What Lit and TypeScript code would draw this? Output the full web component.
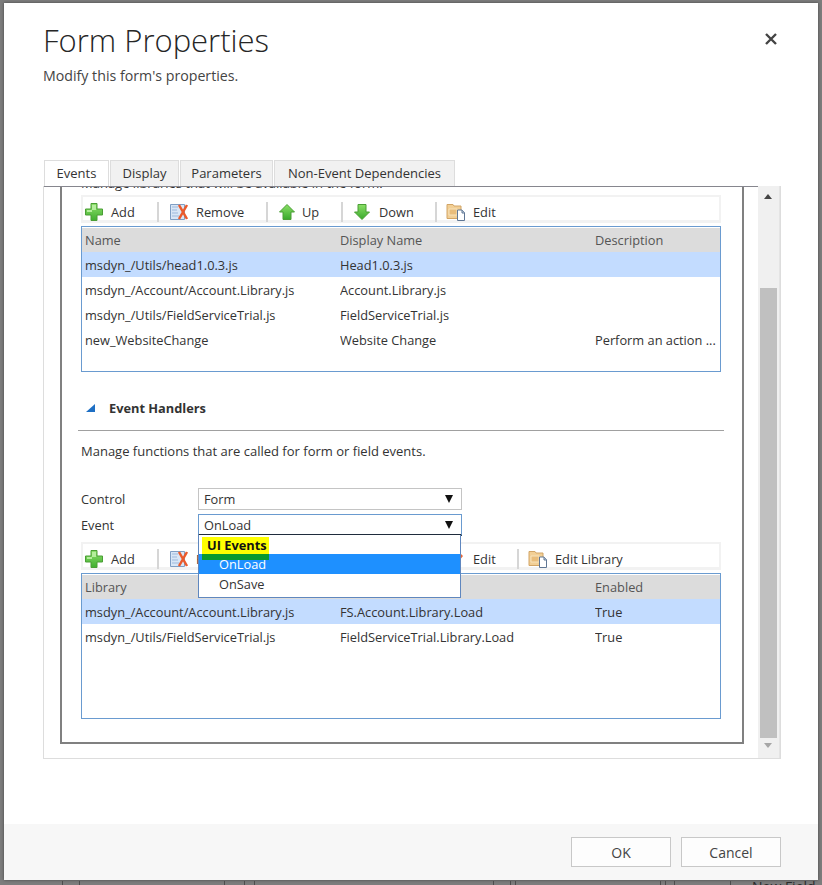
import { LitElement, html, css, svg } from 'lit';
import { customElement } from 'lit/decorators.js';

const grad = (id: string, top: string, bottom: string) =>
  svg`<defs><linearGradient id=${id} x1="0" y1="0" x2="0" y2="1"><stop offset="0" stop-color=${top}/><stop offset="1" stop-color=${bottom}/></linearGradient></defs>`;

const plusIcon = html`<svg width="19" height="18" viewBox="0 0 19 18">${grad('gp', '#8fe06c', '#3fae2f')}<path d="M6 .5h6V6h5.500v6H12v5.500H6V12H.5V6H6z" fill="url(#gp)" stroke="#4a9e35"/><path d="M7 2h4v5H7zM2 7h5v2H2z" fill="#b4ee9c"/></svg>`;
const removeIcon = html`<svg width="19" height="18" viewBox="0 0 19 18"><path d="M.5 1.500h14v15H.5z" fill="#d8e6f6" stroke="#7f9ec4"/><path d="M2 4h6M2 7h5M2 10h6M2 13h7" stroke="#9db9dc"/><path d="M9 2l8 14M17 2l-8 14" stroke="#ea5a2c" stroke-width="2.5"/></svg>`;
const upIcon = html`<svg width="16" height="16" viewBox="0 0 16 16">${grad('gu', '#8be066', '#38a82b')}<path d="M8 .5L15.500 8H12v7.500H4V8H.5z" fill="url(#gu)" stroke="#4a9e35"/></svg>`;
const downIcon = html`<svg width="18" height="16" viewBox="0 0 18 16">${grad('gd', '#8be066', '#38a82b')}<path d="M8 15.500L15.500 8H12V.5H4V8H.5z" fill="url(#gd)" stroke="#4a9e35"/></svg>`;
const editIcon = html`<svg class="shift" width="20" height="19" viewBox="0 0 20 19"><path d="M1 4V2.500h6L8 4h7v12.500H1z" fill="#f2cf95" stroke="#d2a566"/><path d="M3 7h8v6H3z" fill="#e9bd7b" stroke="#f7e3bd"/><path d="M11.500 8H16l2.500 2.500v8h-7z" fill="#fff" stroke="#5f7694"/><path d="M16 8v3h2.500" fill="#c6d3e2" stroke="#5f7694"/></svg>`;
const pencilIcon = html`<svg class="shift" width="20" height="19" viewBox="0 0 20 19"><path d="M2 2h11v15H2z" fill="#e8eef6" stroke="#8aa0bc"/><path d="M15 5l2 2-4 5-2-2z" fill="#e8683a"/></svg>`;

type Tool = { label: string; icon: unknown; w: number };

const tools: Tool[] = [
  { label: 'Add', icon: plusIcon, w: 74 },
  { label: 'Remove', icon: removeIcon, w: 109 },
  { label: 'Up', icon: upIcon, w: 75 },
  { label: 'Down', icon: downIcon, w: 94 },
  { label: 'Edit', icon: editIcon, w: 70 },
];

const tools2: Tool[] = [
  { label: 'Add', icon: plusIcon, w: 74 },
  { label: 'Remove', icon: removeIcon, w: 109 },
  { label: 'Up', icon: upIcon, w: 75 },
  { label: 'Down', icon: downIcon, w: 94 },
  { label: 'Edit', icon: pencilIcon, w: 82 },
  { label: 'Edit Library', icon: editIcon, w: 110 },
];

const libraries = [
  ['msdyn_/Utils/head1.0.3.js', 'Head1.0.3.js', ''],
  ['msdyn_/Account/Account.Library.js', 'Account.Library.js', ''],
  ['msdyn_/Utils/FieldServiceTrial.js', 'FieldServiceTrial.js', ''],
  ['new_WebsiteChange', 'Website Change', 'Perform an action ...'],
];

const handlers = [
  ['msdyn_/Account/Account.Library.js', 'FS.Account.Library.Load', 'True'],
  ['msdyn_/Utils/FieldServiceTrial.js', 'FieldServiceTrial.Library.Load', 'True'],
];

// bits of the page behind the dialog that show under its bottom edge
const behind = [62, 79, 224, 244, 254, 493, 510, 515, 660, 665, 674, 730];

@customElement('app-root')
export class AppRoot extends LitElement {
  static styles = css`
    :host {
      display: block;
      position: relative;
      width: 822px;
      height: 885px;
      overflow: hidden;
      box-sizing: border-box;
      padding: 3px 4px 5px 4px;
      background: #7d7d7d;
      font-family: 'Open Sans', 'Noto Sans', sans-serif;
      font-size: 12.8px;
      color: #333;
    }
    .dialog {
      position: relative;
      height: 100%;
      display: flex;
      flex-direction: column;
      background: #fff;
      box-shadow: 0 0 3px #444;
    }
    .head {
      height: 157px;
      box-sizing: border-box;
      padding: 15px 0 0 39px;
    }
    h1 {
      margin: 0;
      font-size: 31px;
      line-height: 44px;
      font-weight: 300;
      color: #262626;
    }
    .sub {
      margin-top: 4px;
      font-size: 14.2px;
      line-height: 20px;
      color: #444;
    }
    .close {
      position: absolute;
      right: 40px;
      top: 29px;
    }
    .tabs {
      display: flex;
      height: 26px;
      padding-left: 40px;
      font-size: 13px;
    }
    .tab {
      box-sizing: border-box;
      height: 26px;
      line-height: 25px;
      text-align: center;
      background: #f1f1f1;
      border: 1px solid #ddd;
      border-bottom: none;
      margin-right: 1px;
    }
    .tab.active {
      background: #fff;
    }
    .panel {
      position: relative;
      margin-left: 39px;
      width: 738px;
      height: 573px;
      box-sizing: border-box;
      border: 1px solid #ddd;
      border-top: none;
      display: flex;
    }
    .frame {
      position: absolute;
      top: 0;
      left: 0;
      width: 716px;
      border-top: 1px solid #86868e;
    }
    .scrollarea {
      width: 715px;
      height: 572px;
      overflow: hidden;
    }
    .inner {
      margin-left: 16px;
      width: 684px;
      height: 558px;
      box-sizing: border-box;
      border-left: 2px solid #808080;
      border-right: 2px solid #808080;
      border-bottom: 2px solid #808080;
      padding-left: 19px;
      overflow: hidden;
    }
    .clipped {
      margin-top: -12px;
      height: 21px;
      line-height: 18px;
      font-size: 13px;
      white-space: nowrap;
    }
    .toolbar {
      display: flex;
      align-items: center;
      width: 640px;
      height: 28px;
      box-sizing: border-box;
      border: 2px solid #f2f2f2;
      border-bottom: 3px solid #f2f2f2;
      padding: 6px 0 0 2px;
    }
    .tool {
      flex: none;
      display: flex;
      align-items: center;
      box-sizing: border-box;
      height: 20px;
      gap: 7px;
      border-right: 2px solid #d6d6d6;
      white-space: nowrap;
    }
    .tool:not(:first-child) {
      padding-left: 11px;
    }
    .tool:last-child {
      border-right: none;
    }
    .shift {
      margin-left: -2px;
    }
    .grid {
      width: 640px;
      height: 146px;
      margin-top: 3px;
      box-sizing: border-box;
      border: 1px solid #6a9bd0;
    }
    .row {
      display: grid;
      grid-template-columns: 255px 255px 1fr;
      height: 25px;
      line-height: 27px;
      padding-left: 3px;
      white-space: nowrap;
    }
    .row span {
      overflow: hidden;
    }
    .row.header {
      margin-top: 1px;
      height: 24px;
      line-height: 25px;
      background: #dcdcdc;
      color: #555;
    }
    .row.selected {
      background: #c3dcff;
    }
    .section {
      display: flex;
      align-items: center;
      height: 20px;
      margin-top: 26px;
      padding-left: 5px;
      font-weight: 700;
      gap: 13px;
    }
    .rule {
      margin: 12px 0 0 -3px;
      width: 646px;
      border-top: 1px solid #a0a0a0;
    }
    .desc {
      margin-top: 10px;
      line-height: 20px;
      font-size: 13px;
    }
    .fields {
      margin-top: 27px;
      margin-bottom: 6px;
    }
    .field {
      display: flex;
      align-items: center;
      height: 22px;
      margin-bottom: 4px;
    }
    .field label {
      width: 117px;
    }
    .select {
      position: relative;
      display: flex;
      align-items: center;
      justify-content: space-between;
      width: 264px;
      height: 22px;
      box-sizing: border-box;
      border: 1px solid #c4c4c4;
      padding: 0 7px 0 5px;
    }
    .select.open {
      border: 1px solid #6a9bd0;
      border-bottom: 2px solid #1f2c3d;
    }
    .select.open > span {
      padding-top: 1px;
    }
    .menu {
      position: absolute;
      top: 20px;
      left: -1px;
      width: 263px;
      height: 63px;
      box-sizing: border-box;
      background: #fff;
      border: 1px solid #5f87bf;
      border-top: none;
      z-index: 2;
    }
    .group {
      height: 19px;
    }
    .group b {
      position: absolute;
      left: 3px;
      top: 2px;
      width: 67px;
      height: 23px;
      padding-left: 5px;
      box-sizing: border-box;
      line-height: 17px;
      font-weight: 700;
      color: #111;
      background: linear-gradient(#ffff00 17px, #0a9a2e 17px);
    }
    .opt {
      height: 20px;
      line-height: 20px;
      padding-left: 20px;
    }
    .opt.on {
      background: #1e90ff;
      color: #fff;
    }
    .scrollbar {
      position: relative;
      width: 21px;
      height: 572px;
      flex: none;
      background: #f0f0f0;
      border-right: 1px solid #e4e4e4;
    }
    .thumb {
      position: absolute;
      left: 2px;
      top: 102px;
      width: 17px;
      height: 450px;
      background: #c0c0c0;
    }
    .arrow-up,
    .arrow-down {
      position: absolute;
      left: 6px;
      width: 0;
      height: 0;
      border: 4.5px solid transparent;
    }
    .arrow-up {
      top: 8px;
      border-top: none;
      border-bottom: 5px solid #444;
    }
    .arrow-down {
      top: 557px;
      border-bottom: none;
      border-top: 5px solid #a6a6a6;
    }
    .foot {
      margin-top: auto;
      height: 56px;
      box-sizing: border-box;
      background: #f7f7f7;
      display: flex;
      justify-content: flex-end;
      gap: 10px;
      padding: 13px 37px 0 0;
    }
    .btn {
      width: 100px;
      height: 30px;
      box-sizing: border-box;
      border: 1px solid #c8c8c8;
      background: #fdfdfd;
      text-align: center;
      line-height: 29px;
      font-size: 14px;
      color: #444;
    }
    .behind {
      position: absolute;
      left: 0;
      bottom: 0;
      width: 822px;
      height: 4px;
      overflow: hidden;
    }
    .tick {
      position: absolute;
      top: 0;
      width: 1px;
      height: 4px;
      background: #4d4d4d;
    }
    .newfield {
      position: absolute;
      left: 752px;
      top: -3px;
      font-size: 14px;
      line-height: 18px;
      color: #2b2b2b;
    }
  `;

  private renderTools(items: Tool[]) {
    return html`<div class="toolbar">
      ${items.map(
        (t) => html`<div class="tool" style="width:${t.w}px">${t.icon}<span>${t.label}</span></div>`
      )}
    </div>`;
  }

  private renderGrid(cols: string[], rows: string[][]) {
    return html`<div class="grid">
      <div class="row header">${cols.map((c) => html`<span>${c}</span>`)}</div>
      ${rows.map(
        (r, i) => html`<div class="row ${i === 0 ? 'selected' : ''}">${r.map((c) => html`<span>${c}</span>`)}</div>`
      )}
    </div>`;
  }

  render() {
    const caret = html`<svg width="10" height="8" viewBox="0 0 10 8"><path d="M1 0h8L5 8z" fill="#111"/></svg>`;
    return html`
      <div class="dialog">
        <div class="head">
          <h1>Form Properties</h1>
          <div class="sub">Modify this form's properties.</div>
        </div>
        <svg class="close" width="14" height="14" viewBox="0 0 14 14"><path d="M2 2l10 10M12 2L2 12" stroke="#444" stroke-width="2.4"/></svg>
        <div class="tabs">
          <div class="tab active" style="width:65px">Events</div>
          <div class="tab" style="width:69px">Display</div>
          <div class="tab" style="width:93px">Parameters</div>
          <div class="tab" style="width:181px">Non-Event Dependencies</div>
        </div>
        <div class="panel">
          <div class="frame"></div>
          <div class="scrollarea">
            <div class="inner">
              <div class="clipped">Manage libraries that will be available in the form.</div>
              ${this.renderTools(tools)}
              ${this.renderGrid(['Name', 'Display Name', 'Description'], libraries)}
              <div class="section">
                <svg width="10" height="9" viewBox="0 0 10 9"><path d="M9 0v8H0z" fill="#1e6fc4"/></svg>
                <span>Event Handlers</span>
              </div>
              <div class="rule"></div>
              <div class="desc">Manage functions that are called for form or field events.</div>
              <div class="fields">
                <div class="field">
                  <label>Control</label>
                  <div class="select"><span>Form</span>${caret}</div>
                </div>
                <div class="field">
                  <label>Event</label>
                  <div class="select open">
                    <span>OnLoad</span>${caret}
                    <div class="menu">
                      <div class="group"><b>UI Events</b></div>
                      <div class="opt on">OnLoad</div>
                      <div class="opt">OnSave</div>
                    </div>
                  </div>
                </div>
              </div>
              ${this.renderTools(tools2)}
              ${this.renderGrid(['Library', 'Function', 'Enabled'], handlers)}
            </div>
          </div>
          <div class="scrollbar">
            <div class="arrow-up"></div>
            <div class="thumb"></div>
            <div class="arrow-down"></div>
          </div>
        </div>
        <div class="foot">
          <div class="btn">OK</div>
          <div class="btn">Cancel</div>
        </div>
      </div>
      <div class="behind">
        ${behind.map((x) => html`<div class="tick" style="left:${x}px"></div>`)}
        <div class="newfield">New Field</div>
      </div>
    `;
  }
}
